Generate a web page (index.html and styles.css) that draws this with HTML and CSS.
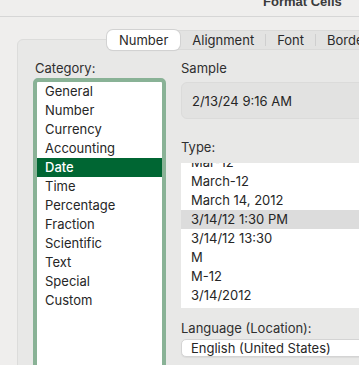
FILE: index.html
```html
<!DOCTYPE html>
<html lang="en">
<head>
  <meta charset="UTF-8">
  <title>Format Cells</title>
  <link rel="stylesheet" href="styles.css">
</head>
<body>
  <div class="titlebar"><span class="title">Format Cells</span></div>

  <div class="tabs">
    <span class="tab active">Number</span>
    <span class="tab">Alignment</span>
    <span class="sep"></span>
    <span class="tab">Font</span>
    <span class="sep"></span>
    <span class="tab">Border</span>
  </div>

  <div class="panel">
    <div class="col-left">
      <div class="label">Category:</div>
      <div class="category-list">
        <div class="item">General</div>
        <div class="item">Number</div>
        <div class="item">Currency</div>
        <div class="item">Accounting</div>
        <div class="item selected">Date</div>
        <div class="item">Time</div>
        <div class="item">Percentage</div>
        <div class="item">Fraction</div>
        <div class="item">Scientific</div>
        <div class="item">Text</div>
        <div class="item">Special</div>
        <div class="item">Custom</div>
      </div>
    </div>

    <div class="col-right">
      <div class="label">Sample</div>
      <div class="sample">2/13/24 9:16 AM</div>

      <div class="label type-label">Type:</div>
      <div class="type-box">
        <div class="type-list">
          <div class="item">Mar-12</div>
          <div class="item">March-12</div>
          <div class="item">March 14, 2012</div>
          <div class="item current">3/14/12 1:30 PM</div>
          <div class="item">3/14/12 13:30</div>
          <div class="item">M</div>
          <div class="item">M-12</div>
          <div class="item">3/14/2012</div>
          <div class="item">14-Mar-2012</div>
        </div>
      </div>

      <div class="label lang-label">Language (Location):</div>
      <div class="dropdown">English (United States)</div>
    </div>
  </div>
</body>
</html>
```

FILE: styles.css
```css
body {
  margin: 0;
  width: 359px;
  height: 365px;
  overflow: hidden;
  background-color: #efeeed;
  font-family: Inter, "Noto Sans", sans-serif;
  font-size: 13px;
  color: #262626;
}
.titlebar {
  height: 16px;
  border-bottom: 1px solid #d6d6d6;
  overflow: hidden;
}
.title {
  display: block;
  margin-top: -7px;
  padding-left: 263px;
  font-family: "Liberation Sans", Arial, sans-serif;
  font-weight: 700;
  color: #3a3a3a;
  line-height: 17px;
  white-space: nowrap;
}
.tabs {
  position: relative;
  z-index: 1;
  display: flex;
  align-items: center;
  margin: 13px 0 0 107px;
  height: 20px;
  width: 280px;
  background: #e3e3e2;
  border-radius: 6px;
  box-shadow: inset 0 0 0 1px #dadad9;
  white-space: nowrap;
}
.tab {
  padding: 0 11px;
  line-height: 20px;
  color: #2a2a2a;
}
.tab.active {
  padding: 0 12px;
  margin-right: 1px;
  background: white;
  border-radius: 6px;
  box-shadow: 0 0 0 1px #d2d2d2, 0 1px 1px rgba(0,0,0,0.08);
}
.sep {
  width: 1px;
  height: 12px;
  background: #cfcfcf;
}
.panel {
  display: flex;
  gap: 15px;
  margin: -11px 0 0 17px;
  height: 400px;
  width: 400px;
  padding: 20px 0 0 15px;
  box-sizing: border-box;
  background: #e8e8e7;
  border: 1px solid #dcdcdb;
  border-radius: 6px;
}
.label {
  line-height: 16px;
  color: #2f2f2f;
  padding-left: 2px;
}
.col-left {
  width: 133px;
  flex-shrink: 0;
}
.col-right {
  width: 220px;
  flex-shrink: 0;
}
.col-right .label {
  padding-left: 0;
}
.category-list {
  margin-top: 2px;
  height: 300px;
  background: white;
  border: 4px solid #89b296;
  border-radius: 5px;
}
.item {
  height: 19px;
  line-height: 19px;
  padding-left: 8px;
  white-space: nowrap;
}
.item.selected {
  background: #006633;
  color: white;
  font-weight: 500;
}
.sample {
  margin-top: 6px;
  height: 37px;
  line-height: 37px;
  padding-left: 10px;
  box-sizing: border-box;
  background: #e2e2e1;
  border: 1px solid #dbdbda;
  border-radius: 6px;
}
.type-label {
  margin-top: 20px;
}
.type-box {
  margin-top: 8px;
  height: 145px;
  overflow: hidden;
  background: white;
}
.type-list {
  margin-top: -10px;
}
.type-list .item {
  padding-left: 10px;
}
.item.current {
  background: #dcdcdc;
}
.lang-label {
  margin-top: 12px;
}
.dropdown {
  margin-top: 3px;
  height: 18px;
  line-height: 16px;
  padding-left: 9px;
  box-sizing: border-box;
  background: white;
  border: 1px solid #d4d4d4;
  border-radius: 5px;
  box-shadow: 0 1px 1px rgba(0,0,0,0.06);
}
```
